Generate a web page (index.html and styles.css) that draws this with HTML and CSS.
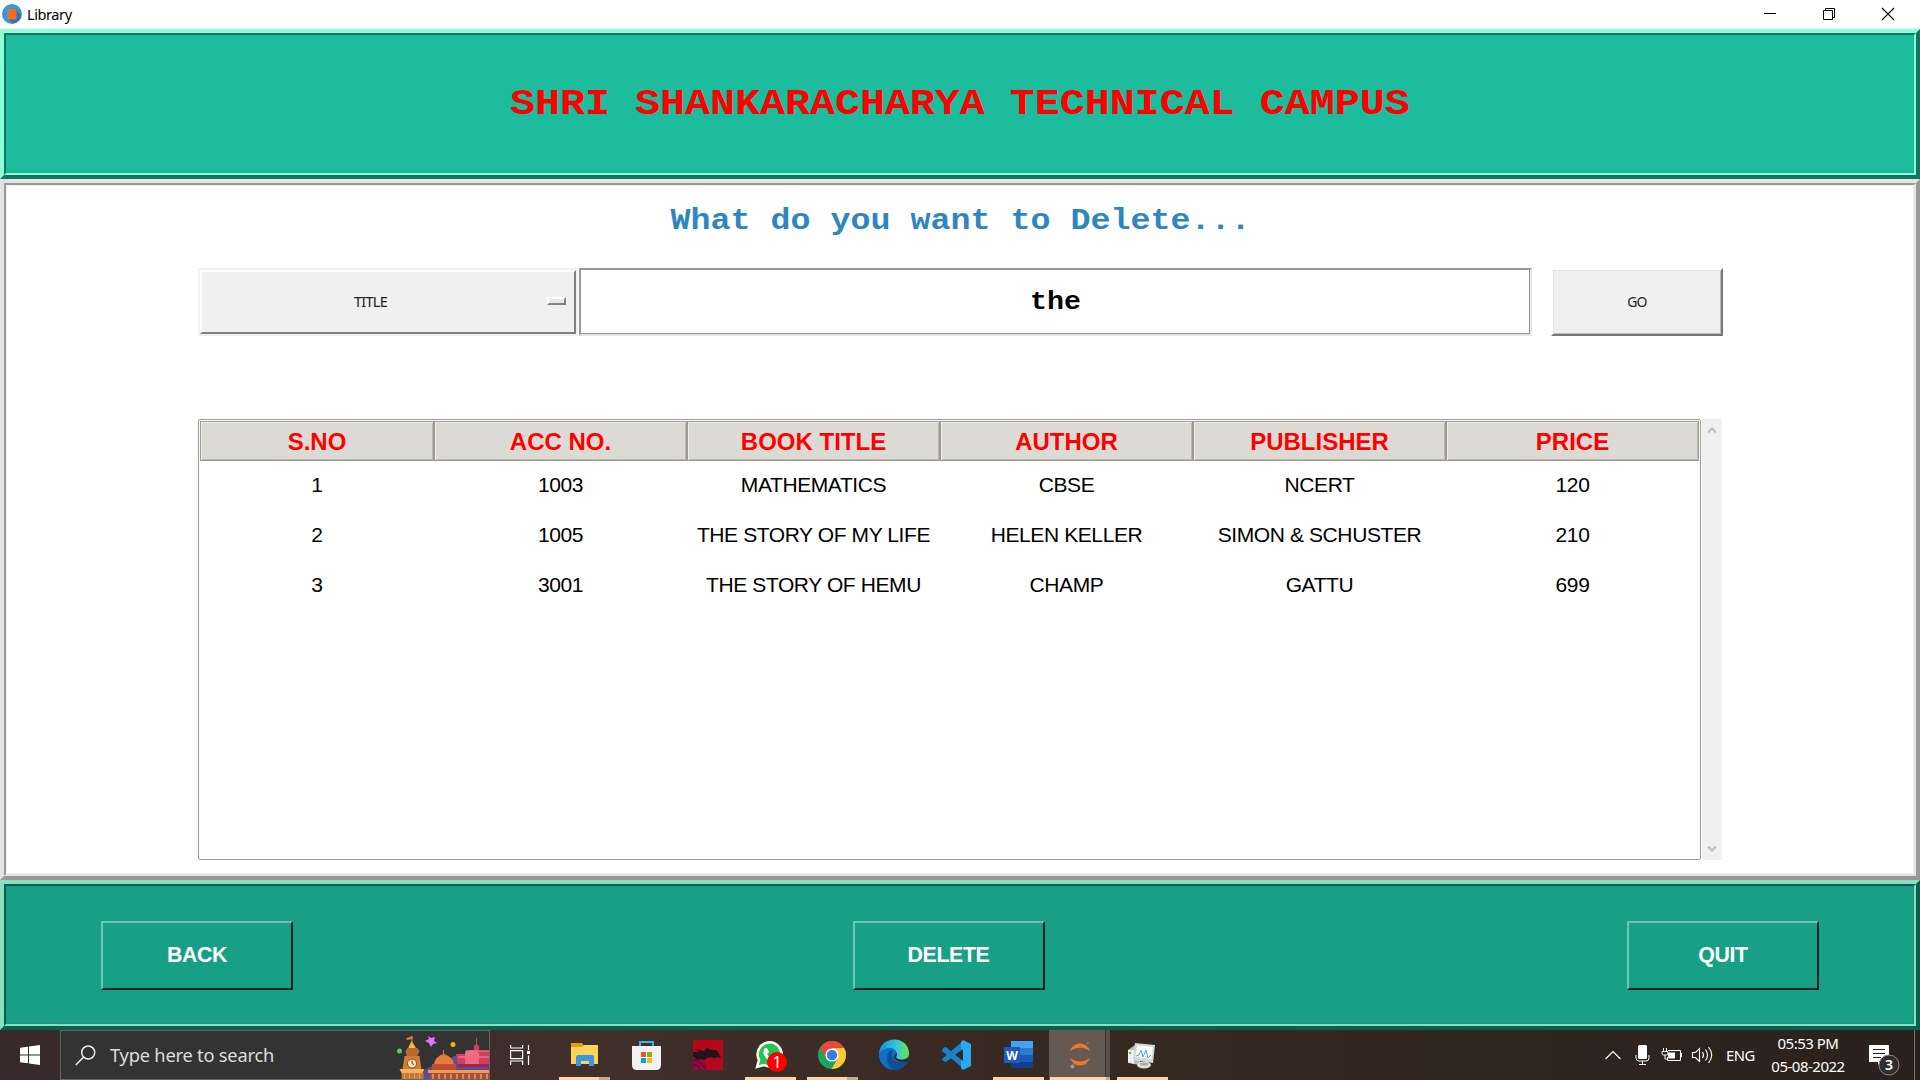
FILE: index.html
```html
<!DOCTYPE html>
<html lang="en">
<head>
<meta charset="utf-8">
<title>Library</title>
<link rel="stylesheet" href="styles.css">
</head>
<body>
<div class="titlebar">
  <svg class="app-icon" width="20" height="20" viewBox="0 0 20 20"><circle cx="10" cy="10" r="10" fill="#3498db"/><path d="M14 5l5 6a10 10 0 0 1-8 8.500l-4-4z" fill="#2c77b0"/><rect x="5.500" y="5" width="9" height="10.500" rx="1" fill="#ff6b1a"/><path d="M5 6.500h2M5 9h2M5 11.500h2M5 14h2" stroke="#8795a8" stroke-width="1.200"/></svg>
  <span class="app-name">Library</span>
  <div class="window-controls">
    <svg width="12" height="12" viewBox="0 0 12 12"><path d="M0 5.500h12" stroke="#000"/></svg>
    <svg width="12" height="12" viewBox="0 0 12 12" fill="none" stroke="#000"><path d="M.5 2.500h9v9h-9zM2.500 2.500v-2h9v9h-2"/></svg>
    <svg width="12" height="12" viewBox="0 0 12 12"><path d="M0 0l12 12M12 0L0 12" stroke="#000" stroke-width="1.100"/></svg>
  </div>
</div>

<header class="ridge banner"><div class="ridge-inner">
  <h1>SHRI SHANKARACHARYA TECHNICAL CAMPUS</h1>
</div></header>

<main class="ridge content"><div class="ridge-inner">
  <h2>What do you want to Delete...</h2>
  <div class="search-row">
    <div class="option-menu"><div class="option-face"><span>TITLE</span><i class="indicator"></i></div></div>
    <div class="entry"><span>the</span></div>
    <div class="go-button"><span>GO</span></div>
  </div>
  <div class="results">
    <div class="tree">
      <div class="tree-row tree-head"><div>S.NO</div><div>ACC NO.</div><div>BOOK TITLE</div><div>AUTHOR</div><div>PUBLISHER</div><div>PRICE</div></div>
      <div class="tree-row"><div>1</div><div>1003</div><div>MATHEMATICS</div><div>CBSE</div><div>NCERT</div><div>120</div></div>
      <div class="tree-row"><div>2</div><div>1005</div><div>THE STORY OF MY LIFE</div><div>HELEN KELLER</div><div>SIMON &amp; SCHUSTER</div><div>210</div></div>
      <div class="tree-row"><div>3</div><div>3001</div><div>THE STORY OF HEMU</div><div>CHAMP</div><div>GATTU</div><div>699</div></div>
    </div>
    <div class="scrollbar">
      <svg width="10" height="8" viewBox="0 0 10 8"><path d="M1 6.500l4-4 4 4" fill="none" stroke="#c1c1c1" stroke-width="2.400"/></svg>
      <svg width="10" height="8" viewBox="0 0 10 8"><path d="M1 1.500l4 4 4-4" fill="none" stroke="#c1c1c1" stroke-width="2.400"/></svg>
    </div>
  </div>
</div></main>

<footer class="ridge actions"><div class="ridge-inner">
  <div class="action">BACK</div><div class="action">DELETE</div><div class="action">QUIT</div>
</div></footer>

<nav class="taskbar">
  <div class="start"><svg width="20" height="20" viewBox="0 0 20 20" fill="#fff"><path d="M0 2.800L8 1.700V9.500H0zM9 1.500L20 0V9.500H9zM0 10.500H8V18.300L0 17.200zM9 10.500H20V20L9 18.500z"/></svg></div>
  <div class="search">
    <svg class="search-glass" width="21" height="21" viewBox="0 0 21 21" fill="none" stroke="#eee" stroke-width="1.500"><circle cx="13.200" cy="7.500" r="6.500"/><path d="M8.500 12.200L.7 20"/></svg>
    <span>Type here to search</span>
    <svg class="skyline" width="94" height="48" viewBox="0 0 94 48">
      <path d="M25 48c2-10 12-15 24-15l10-8h35v23z" fill="#565092"/>
      <path d="M61 23h9v-3h9v-5l2-2V7h1v6l2 2v5h10v14H63z" fill="#d23e5e"/>
      <path d="M63 26h31M71 20h23" stroke="#f56c83" stroke-width="1.500"/><path d="M70 22q7-6 14 0v12H70z" fill="#f06a80"/>
      <path d="M62 33h32v3H62z" fill="#a5244d"/>
      <path d="M39 33q1-7 9-10v-4h1v4q9 3 10 10z" fill="#e47a3b"/><path d="M37 33h24v6H37z" fill="#b8532d"/>
      <path d="M33 39h61v3H33z" fill="#f09a58"/><path d="M35 42h59v6H35z" fill="#a94e38"/>
      <path d="M38 43v5M44 43v5M50 43v5M56 43v5M62 43v5M68 43v5M74 43v5M80 43v5M86 43v5M92 43v5" stroke="#e08b56" stroke-width="2"/>
      <g transform="translate(-4.500 0)">
        <path d="M21.500 5v7" stroke="#de7540"/><path d="M16 7l6-2v3l-6 1z" fill="#e87a38"/>
        <path d="M18 16l3-6 4 6v3h-7z" fill="#f4bb3b"/><path d="M15 20l2-3h10l2 3-2 5H16z" fill="#b96a2e"/><path d="M14 25h15l2 13H12z" fill="#cf7d34"/><path d="M9 38h25l-2 4H11z" fill="#f2b45c"/><path d="M11 42h22v6H11z" fill="#c57739"/><path d="M14 42v6M19 42v6M24 42v6M29 42v6" stroke="#e9a357"/>
        <circle cx="21.500" cy="32.500" r="4.500" fill="#ffe8b5" stroke="#874522"/><path d="M21.500 29.500v3l2 1" stroke="#5d321e" fill="none"/>
      </g>
      <circle cx="4.500" cy="20" r="2.500" fill="#45d16b"/><circle cx="58" cy="13.500" r="2.500" fill="#ffb000"/>
      <path d="M33 5l3 2 4-1-1 4 3 2-4 1-2 3-2-4-4-2 4-2z" fill="#d97bff"/>
    </svg>
  </div>
  <div class="task-view"><svg width="20" height="20" viewBox="0 0 20 20" fill="none" stroke="#fff" stroke-width="1.200"><path d="M.6 0v3h12V0M.6 20v-4h12v4M.6 5.600h12v8H.6zM18.500 0v5M18.500 10.500V20"/><path d="M17 6h3v3h-3z" fill="#fff" stroke="none"/></svg></div>
  <div class="apps">
    <div class="app open stacked"><svg width="32" height="32" viewBox="0 0 32 32"><path d="M3 4h11l2 3-2 3H3z" fill="#e09e0b"/><path d="M3 8h11l2-2h14v19H3z" fill="#ffd35a"/><path d="M8 27V18q0-2 2-2h14q2 0 2 2v9h-5v-5h-8v5z" fill="#3b94dc"/></svg></div>
    <div class="app"><svg width="32" height="32" viewBox="0 0 32 32"><path d="M10 8V3h13v5" fill="none" stroke="#31b5f4" stroke-width="2"/><path d="M2 7h29v19q0 5-5 5H7q-5 0-5-5z" fill="#f1f1f1"/><path d="M11 13h5v5h-5z" fill="#f25022"/><path d="M17 13h5v5h-5z" fill="#7fba00"/><path d="M11 19h5v5h-5z" fill="#00a4ef"/><path d="M17 19h5v5h-5z" fill="#ffb900"/></svg></div>
    <div class="app"><svg width="32" height="32" viewBox="0 0 32 32"><path d="M1 1h30v30H1z" fill="#b5081c"/><path d="M1 16q12 2 15 15H1z" fill="#96073c"/><path d="M1 13l6 0-4-3 9 2 3-3 4 2 5 0 3 4 2 4-6-1 1 2-5-2-4 1-3 2-3-1-4 1-4-4z" fill="#21141b"/><path d="M1 21q9 1 12 9M1 25q6 1 8 6" stroke="#40102c" fill="none"/></svg></div>
    <div class="app open"><svg width="32" height="32" viewBox="0 0 32 32"><path d="M3 28l2-7A12 12 0 1 1 10 26z" fill="#27c34b" stroke="#fff" stroke-width="2.500"/><path d="M11 9l2 0 2 4-2 2q2 4 6 5l2-2 3 2-2 4q-5 1-9-4-6-6-2-11z" fill="#fff"/><circle cx="23" cy="23" r="10" fill="#f00"/><text x="23" y="28.500" text-anchor="middle" font-size="16" fill="#fff">1</text></svg></div>
    <div class="app open stacked"><svg width="32" height="32" viewBox="0 0 32 32"><circle cx="16" cy="16" r="14" fill="#1da462"/><path d="M3.900 9A14 14 0 0 1 28.100 9L16 16z" fill="#e6493b"/><path d="M3.900 9L10 19l6-3z" fill="#e6493b"/><path d="M28.100 9A14 14 0 0 1 15.500 30L22 19V9z" fill="#fcc934"/><path d="M16 9h12.100L22 19z" fill="#fcc934"/><path d="M4.500 8.500L16 9h12.100A14 14 0 0 0 4.500 8.500z" fill="#e6493b"/><circle cx="16" cy="16" r="6.600" fill="#fff"/><circle cx="16" cy="16" r="5.200" fill="#3b79e8"/></svg></div>
    <div class="app"><svg width="32" height="32" viewBox="0 0 32 32"><defs><linearGradient id="eg"><stop stop-color="#168be0"/><stop offset=".6" stop-color="#36c6dc"/><stop offset="1" stop-color="#70e543"/></linearGradient></defs><circle cx="16" cy="16" r="15" fill="#0d70c3"/><path d="M1 15C2-4 30-4 31 14c0 6-6 8-11 6-3-1-2-3-1-5-1-9-15-7-18 0z" fill="url(#eg)"/><path d="M9 18q0-6 6-7-3 6 0 9 4 5 14 3-4 8-13 8Q9 29 9 18z" fill="#0c4f98"/><path d="M19 14q-4 2-3 5 3 5 13 4l2-5q-5 4-11 2-3-1-1-4z" fill="#33281f"/></svg></div>
    <div class="app"><svg width="32" height="32" viewBox="0 0 32 32"><path d="M3 9l3-1L24 23v7L2 12zM2 20L24 1v8L6 23l-3-1z" fill="#1683cc"/><path d="M23 1l8 4v22l-8 4-2-2V3z" fill="#2aa9f2"/><path d="M23 10v12l-7-6z" fill="#33281f"/></svg></div>
    <div class="app open"><svg width="32" height="32" viewBox="0 0 32 32"><path d="M9 2h22v7H9z" fill="#41a5ee"/><path d="M9 9h22v7H9z" fill="#2b7cd3"/><path d="M9 16h22v7H9z" fill="#185abd"/><path d="M9 23h22v6H9z" fill="#103f91"/><rect x="2" y="8" width="16" height="16" rx="1" fill="#1c5bbd"/><text x="10" y="20.500" text-anchor="middle" font-size="12" font-weight="700" fill="#fff">W</text></svg></div>
    <div class="app open active"><svg width="32" height="32" viewBox="0 0 32 32"><path d="M6 12q3-7.500 10-7.500t10 7.500q-10-7-20 0zM6 19q3 7.500 10 7.500t10-7.500q-10 7-20 0z" fill="#f37726"/><circle cx="23.500" cy="4" r="1.500" fill="#777"/><circle cx="8.500" cy="27.500" r="2" fill="#999"/></svg></div>
    <div class="app open"><svg width="32" height="32" viewBox="0 0 32 32"><path d="M2 11l7-5 5 3v17L2 24z" fill="#bdbdbb"/><path d="M2 11h6v14l-6-2z" fill="#efefef"/><path d="M3 14h2" stroke="#4b3" stroke-width="2"/><path d="M9 4l20 2-2 18-20-3z" fill="#d3d7d9"/><path d="M11 6.500l16 1.500-1.500 12-16-2z" fill="#f9fdff"/><path d="M10 17l3-1 2-5 2 7 3-7 2 8 3-3" stroke="#4ca4d2" fill="none"/><ellipse cx="18" cy="26" rx="7" ry="3.500" fill="#dedede"/><ellipse cx="18" cy="25" rx="4" ry="1.500" fill="#aaa"/></svg></div>
  </div>
  <div class="tray">
    <svg class="tray-up" width="16" height="10" viewBox="0 0 16 10"><path d="M.5 9L8 1.500 15.500 9" fill="none" stroke="#fff" stroke-width="1.200"/></svg>
    <svg class="tray-mic" width="14" height="20" viewBox="0 0 14 20"><rect x="3" width="9" height="14" rx="1.500" fill="#fff"/><path d="M1 10v3q0 3 3 3h7q3 0 3-3v-3M7.500 16v3.500M4 19.500h7" stroke="#fff" fill="none"/></svg>
    <svg class="tray-battery" width="20" height="14" viewBox="0 0 20 14"><path d="M6 2.500h12.500v10h-13V9M19.500 5v4M1.500 0v3M4.500 0v3M0 3.500h6v2Q6 7 4.500 7h-3Q0 7 0 5.500zM3 7v4h2" stroke="#fff" fill="none"/><path d="M5.500 4.500H13v6H6.500z" fill="#fff"/></svg>
    <svg class="tray-sound" width="21" height="18" viewBox="0 0 21 18" fill="none" stroke="#fff" stroke-width="1.100"><path d="M.5 6.500h3l4-4v13l-4-4h-3zM10.500 6q2 3 0 6M13.500 3.500q4 5.500 0 11M16.500 1q6.500 8 0 16"/></svg>
    <span class="lang">ENG</span>
    <div class="clock"><span>05:53 PM</span><span>05-08-2022</span></div>
    <div class="notify"><svg width="31" height="31" viewBox="0 0 31 31"><path d="M0 0h20v17H12l-3 3v-3H0z" fill="#fff"/><path d="M4 4.500h12M4 8.500h12M4 12.500h8" stroke="#2b221f"/><circle cx="20" cy="20" r="10" fill="#2e2e2e" stroke="#888"/><text x="20" y="25" text-anchor="middle" font-size="14" font-weight="600" fill="#fff">3</text></svg></div>
    <div class="show-desktop"></div>
  </div>
</nav>
</body>
</html>
```
FILE: styles.css
```css
* { box-sizing: border-box; margin: 0; }
body { width: 1920px; height: 1080px; overflow: hidden; display: flex; flex-direction: column; background: #fff; font-family: "Liberation Sans", Arial, sans-serif; }
svg { display: block; flex: none; overflow: visible; }

.titlebar { height: 29px; display: flex; align-items: center; padding: 0 26px 1px 2px; background: #fff; }
.app-name { margin-left: 5px; font: 14.5px/20px "Noto Sans", sans-serif; letter-spacing: -.4px; }
.window-controls { margin-left: auto; display: flex; gap: 47px; }

.ridge { flex: none; border: 4px solid; border-color: var(--light) var(--dark) var(--dark) var(--light); background: var(--face); }
.ridge-inner { height: 100%; border: 2px solid; border-color: var(--dark) var(--light) var(--light) var(--dark); box-shadow: inset 0 0 0 1px var(--soft); }
.banner { height: 150px; --light: #8bffdb; --dark: #147460; --face: #1cbc9c; --soft: #1fb496; }
.banner .ridge-inner { display: flex; justify-content: center; padding-top: 47px; }
.banner h1 { font: bold 36px/46px "Courier New", "Liberation Mono", monospace; color: #f00; white-space: pre; transform: scaleX(1.157); }

.content { height: 701px; --light: #e3e3e3; --dark: #999; --face: #fff; --soft: #f1f1f1; }
.content .ridge-inner { padding: 15px 191px 0 192px; }
.content h2 { height: 42px; text-align: center; font: bold 30px/42px "Courier New", "Liberation Mono", monospace; color: #2e86c1; transform: scaleX(1.111); }
.search-row { display: flex; height: 68px; margin-top: 26px; }
.search-row > div { flex: none; }
.option-menu { width: 380px; height: 68px; padding: 2px; background: #f0f0f0; }
.option-face { position: relative; height: 100%; display: flex; align-items: center; justify-content: center; padding: 0 35px 2px 0; border: 2px solid; border-color: #fff #808080 #808080 #fff; background: #f0f0f0; }
.option-face span, .go-button span { font: 14.5px/20px "Noto Sans", sans-serif; letter-spacing: -.7px; color: #222; }
.indicator { position: absolute; right: 8px; top: 25px; width: 19px; height: 8px; border: 2px solid; border-color: #fff #808080 #808080 #fff; background: #e8e8e8; }
.entry { width: 953px; height: 68px; margin-left: 1px; display: flex; align-items: center; justify-content: center; border: 2px solid; border-color: #999 #e5e5e5 #e5e5e5 #999; box-shadow: inset -1px -1px 0 #999; background: #fff; }
.entry span { font: bold 26px/32px "Courier New", "Liberation Mono", monospace; transform: scaleX(1.09); }
.go-button { width: 172px; margin-left: 19px; display: flex; align-items: center; justify-content: center; border: 2px solid; border-color: #fff #777 #777 #fff; background: #f0f0f0; box-shadow: inset 1px 1px 0 #e5e5e5, inset -1px -1px 0 #bbb; }
.go-button span { font-size: 14px; padding-bottom: 1px; }
.results { display: flex; height: 441px; margin-top: 83px; }
.tree { width: 1503px; padding: 1px; border: 1px solid #9e9a91; border-radius: 2px; background: #fff; }
.tree-row { display: grid; grid-template-columns: 234px 253px 253px 253px 253px 253px; height: 50px; font-size: 21px; }
.tree-row > div { display: flex; align-items: center; justify-content: center; padding-bottom: 2px; white-space: nowrap; letter-spacing: -.4px; }
.tree-head { height: 40px; font-size: 24px; font-weight: 700; color: #f00; }
.tree-head > div { padding: 2px 0 0; background: #dcdad5; border: 1px solid #9e9a91; box-shadow: inset 1px 1px 0 #efedea, inset -1px -1px 0 #bdb8af; letter-spacing: 0; }
.scrollbar { width: 20px; margin-left: 1px; display: flex; flex-direction: column; align-items: center; justify-content: space-between; padding: 7px 0; background: #f0f0f0; }

.actions { height: 150px; --light: #8adfc3; --dark: #0b5f4e; --face: #17a085; --soft: #1b947c; }
.actions .ridge-inner { display: flex; align-items: flex-start; justify-content: space-between; padding: 35px 95px 0; }
.action { width: 192px; height: 69px; display: flex; align-items: center; justify-content: center; border: 2px solid; border-color: #67c9b1 #07211c #07211c #67c9b1; font-size: 21.300px; font-weight: 700; letter-spacing: -.35px; color: #fff; }
.action:nth-child(2) { margin-right: 23px; }

.taskbar { height: 50px; flex: none; display: flex; background: linear-gradient(90deg, #382a2b, #402f2b 30%, #35281f 60%, #2a211e); color: #fff; font-family: "Noto Sans", sans-serif; }
.start { width: 60px; display: flex; align-items: center; justify-content: center; }
.search { width: 430px; display: flex; align-items: center; padding-left: 14px; border: 1px solid #666; background: #333; overflow: hidden; font-size: 18.300px; color: #ddd; }
.search span { margin-left: 14px; padding-bottom: 2px; letter-spacing: -.22px; }
.skyline { margin-left: auto; }
.task-view { width: 62px; display: flex; align-items: center; padding-left: 20px; }
.apps { display: flex; }
.app { position: relative; width: 62px; display: flex; align-items: center; justify-content: center; padding-left: 1px; }
.app.open::after { content: ""; position: absolute; left: 7px; right: 4px; bottom: 0; height: 3px; background: #ffd2ab; }
.app.stacked::after { background: linear-gradient(90deg, #ffd2ab 40px, #c9a68c 40px); }
.app.active { background: linear-gradient(90deg, transparent 1px, #665954 1px, #665954 57px, #3f3430 57px, #3f3430 58px, #5b4f4a 58px); }
.app.active::after { left: 2px; right: 0; background: linear-gradient(90deg, #ffd2ab 56px, #c9a68c 56px); }
.tray { margin-left: auto; display: flex; align-items: center; }
.tray-mic { margin-left: 14px; }
.tray-battery { margin-left: 13px; }
.tray-sound { margin-left: 10px; }
.lang { width: 28px; margin-left: 13px; font-size: 14.800px; letter-spacing: -.5px; }
.clock { width: 82px; margin-left: 13px; display: flex; flex-direction: column; align-items: center; font-size: 15px; line-height: 23px; letter-spacing: -.5px; white-space: nowrap; }
.notify { margin-left: 20px; padding-top: 10px; }
.show-desktop { width: 6px; height: 50px; margin-left: 14px; border-left: 1px solid #777; }
```
